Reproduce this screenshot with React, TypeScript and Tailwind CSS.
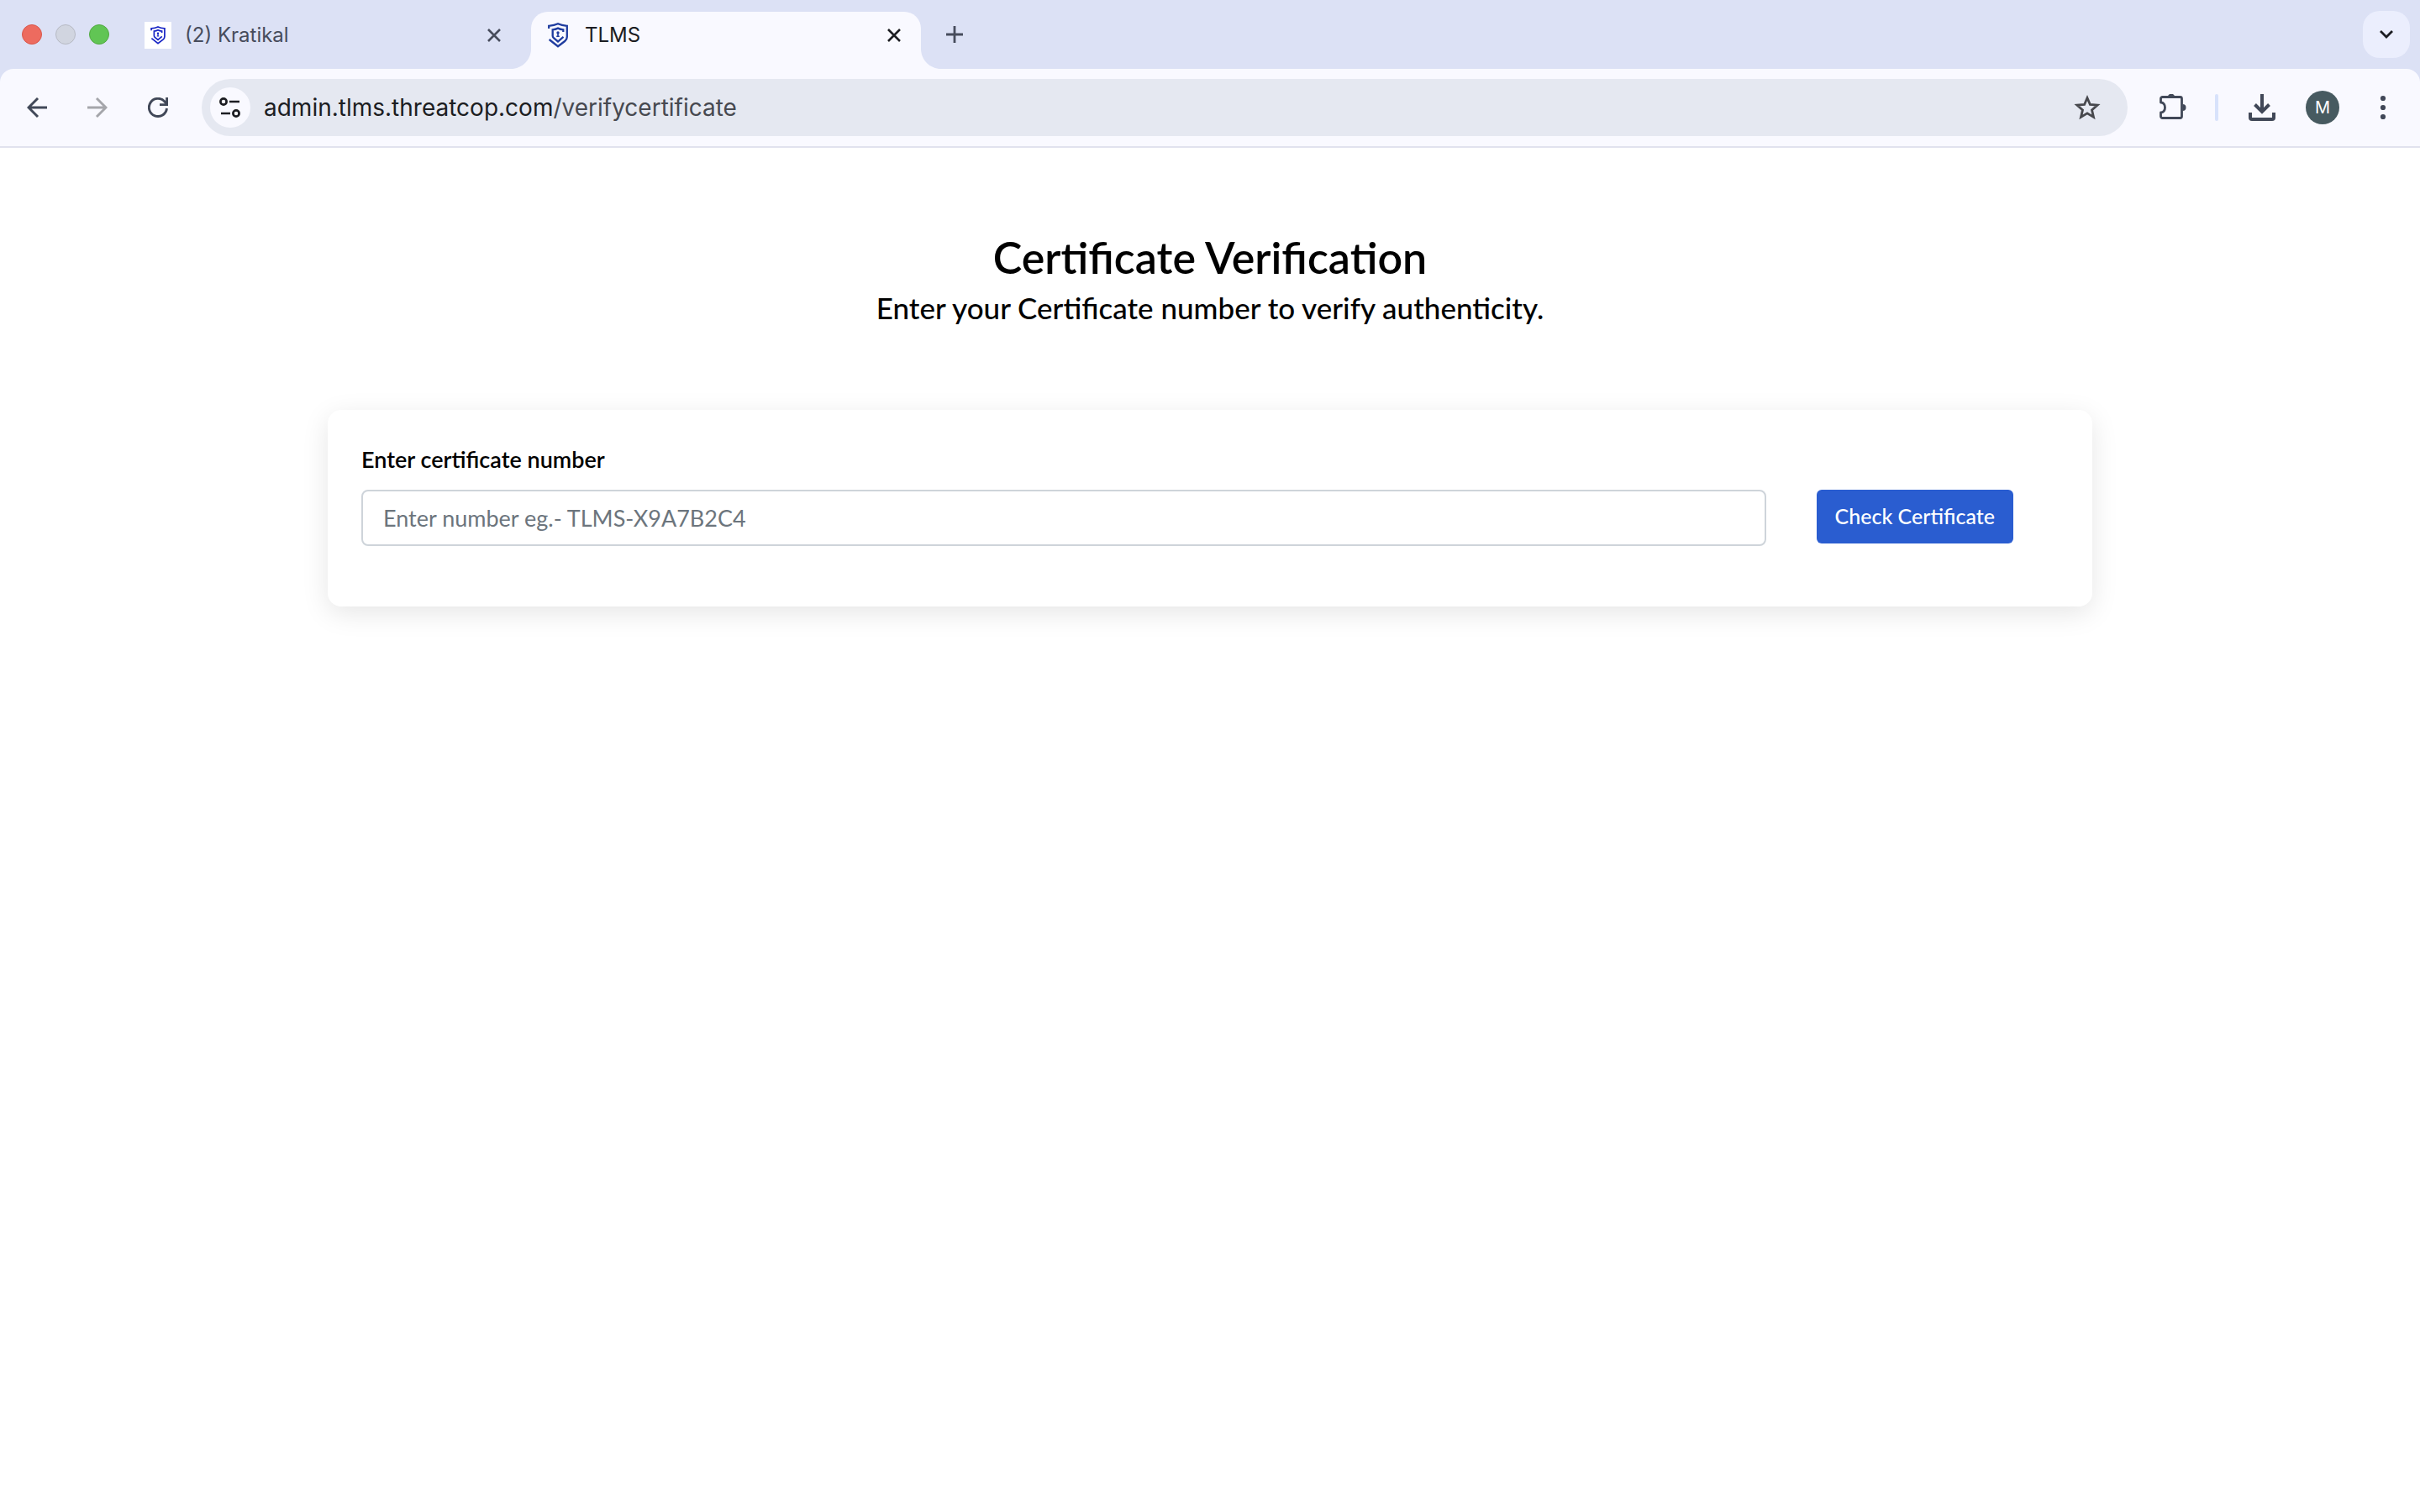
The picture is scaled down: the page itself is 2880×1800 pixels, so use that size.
import type { ReactNode } from "react";

function ShieldLogo({ className }: { className: string }) {
  return (
    <svg viewBox="0 0 24 30" className={className} fill="none" stroke="currentColor" strokeWidth="2.3" aria-hidden="true">
      <path d="M1.200 7V3.800C5 3.600 9 2.800 12 1.300c3 1.500 7 2.300 10.800 2.500V17c0 2.200-.8 3.600-2.600 5L12 28.200 1.600 20" />
      <path d="M18.300 11V8.300c-2.300-.2-4.500-.8-6.300-1.700-1.800.9-4 1.500-6.300 1.700v7.500c0 1 .4 1.700 1.200 2.400L12 22.500l6.500-5.700" />
      <circle cx="12" cy="12" r="1.700" fill="currentColor" stroke="none" />
      <path d="M12 12.500v3.800" strokeWidth="1.600" />
      <path d="M10.200 16.300h3.600" strokeWidth="1.500" />
    </svg>
  );
}

function CloseIcon() {
  return (
    <svg viewBox="0 0 16 16" className="size-4" fill="none" stroke="currentColor" strokeWidth="2.6" aria-hidden="true">
      <path d="M1 1l14 14M15 1L1 15" />
    </svg>
  );
}

function IconButton({ label, className = "", children }: { label: string; className?: string; children: ReactNode }) {
  return (
    <button type="button" aria-label={label} className={`flex shrink-0 items-center justify-center ${className}`}>
      {children}
    </button>
  );
}

function TabStrip() {
  return (
    <div className="flex h-[82px] items-center bg-[#dce1f5] pr-3 pl-[26px] text-[24px] text-[#474c5c]">
      <div className="flex w-[146px] shrink-0 gap-4">
        <button type="button" aria-label="Close window" className="size-6 rounded-full border border-[#d9574b] bg-[#ed6b5f]" />
        <button type="button" aria-label="Minimize window" className="size-6 rounded-full border border-[#b7bac4] bg-[#d1d5e0]" />
        <button type="button" aria-label="Zoom window" className="size-6 rounded-full border border-[#52a941] bg-[#61c554]" />
      </div>
      <div className="flex w-[460px] shrink-0 items-center pt-px pr-9">
        <span className="flex size-8 items-center justify-center bg-white text-[#1522c4]">
          <ShieldLogo className="h-[22px] w-[18px]" />
        </span>
        <span className="ml-4 flex-1">(2) Kratikal</span>
        <IconButton label="Close tab" className="size-4">
          <CloseIcon />
        </IconButton>
      </div>
      <div className="relative flex h-[68px] w-[464px] shrink-0 items-center self-end rounded-t-[20px] bg-[#f9f9ff] pr-6 pb-3 pl-5 text-[#1c1d22]">
        <svg viewBox="0 0 24 24" className="absolute bottom-0 -left-6 size-6" fill="#f9f9ff" aria-hidden="true">
          <path d="M24 0v24H0C13.300 24 24 13.300 24 0z" />
        </svg>
        <svg viewBox="0 0 24 24" className="absolute -right-6 bottom-0 size-6" fill="#f9f9ff" aria-hidden="true">
          <path d="M0 0v24h24C10.700 24 0 13.300 0 0z" />
        </svg>
        <ShieldLogo className="h-[30px] w-6 text-[#1f3c9f]" />
        <span className="ml-5 flex-1">TLMS</span>
        <IconButton label="Close tab" className="size-4">
          <CloseIcon />
        </IconButton>
      </div>
      <IconButton label="New tab" className="ml-[30px] size-5">
        <svg viewBox="0 0 20 20" className="size-5" stroke="currentColor" strokeWidth="2.8" aria-hidden="true">
          <path d="M10 0v20M0 10h20" />
        </svg>
      </IconButton>
      <IconButton label="Search tabs" className="ml-auto size-14 rounded-[20px] bg-[#ebeefd] text-[#1c1d22]">
        <svg viewBox="0 0 16 10" className="h-[10px] w-4" fill="none" stroke="currentColor" strokeWidth="2.800" aria-hidden="true">
          <path d="M1 1l7 7 7-7" />
        </svg>
      </IconButton>
    </div>
  );
}

function Toolbar() {
  return (
    <div className="bg-[#dce1f5]">
      <div className="flex h-[94px] items-center rounded-t-[16px] border-b-2 border-[#e1e2ee] bg-[#f9f9ff] pr-8 pl-8 text-[#414858]">
        <IconButton label="Back" className="size-6">
          <svg viewBox="0 0 24 24" className="size-6" fill="none" stroke="currentColor" strokeWidth="2.900" aria-hidden="true">
            <path d="M24 12H2M13 1L2 12l11 11" />
          </svg>
        </IconButton>
        <IconButton label="Forward" className="ml-12 size-6 text-[#a5a6ab]">
          <svg viewBox="0 0 24 24" className="size-6" fill="none" stroke="currentColor" strokeWidth="2.900" aria-hidden="true">
            <path d="M0 12h22M11 1l11 11-11 11" />
          </svg>
        </IconButton>
        <IconButton label="Reload" className="ml-12 size-6">
          <svg viewBox="0 0 24 24" className="size-6" fill="none" stroke="currentColor" strokeWidth="2.900" aria-hidden="true">
            <path d="M22.500 13A10.600 10.600 0 1 1 20 5l2.500 2.800" />
            <path d="M22.600 0v8.600H14" />
          </svg>
        </IconButton>
        <div className="ml-10 flex h-[68px] flex-1 items-center rounded-full bg-[#e5e8f1] pr-8 pl-[10px]">
          <IconButton label="Site information" className="size-12 rounded-full bg-[#f9f9ff] text-[#1c1d22]">
            <svg viewBox="0 0 26 24" className="h-6 w-[26px]" fill="none" stroke="currentColor" strokeWidth="2.700" aria-hidden="true">
              <circle cx="5" cy="5" r="3.600" />
              <path d="M12 5h12M2 19h11" />
              <circle cx="20" cy="19" r="3.600" />
            </svg>
          </IconButton>
          <div role="textbox" aria-label="Address" tabIndex={0} className="ml-4 flex-1 text-[28px] leading-9 text-[#1c1d22]">
            admin.tlms.threatcop.com<span className="text-[#474950]">/verifycertificate</span>
          </div>
          <IconButton label="Bookmark this page" className="size-8 text-[#47484d]">
            <svg viewBox="0 0 32 32" className="size-8" fill="none" stroke="currentColor" strokeWidth="2.800" aria-hidden="true">
              <path d="M16 4.500l3.400 8 8.700.7-6.600 5.700 2 8.500L16 22.900l-7.500 4.500 2-8.500-6.600-5.700 8.700-.7z" />
            </svg>
          </IconButton>
        </div>
        <IconButton label="Extensions" className="ml-[38px] h-8 w-8">
          <svg viewBox="0 0 32 32" className="size-8" fill="none" stroke="currentColor" strokeWidth="2.800" strokeLinejoin="round" aria-hidden="true">
            <path d="M1.500 10V5.500a2 2 0 0 1 2-2h21a2 2 0 0 1 2 2v21a2 2 0 0 1-2 2h-21a2 2 0 0 1-2-2V22c3.500 0 5-3 5-6s-1.500-6-5-6z" />
            <path d="M10 3.500a4 3.800 0 0 1 8 0zM27.500 12a4 4 0 0 1 0 8z" fill="currentColor" stroke="none" />
          </svg>
        </IconButton>
        <div className="ml-[34px] h-8 w-1 rounded-full bg-[#d8e2fb]" />
        <IconButton label="Downloads" className="ml-9 size-8">
          <svg viewBox="0 0 32 32" className="size-8" fill="none" stroke="currentColor" strokeWidth="4" aria-hidden="true">
            <path d="M16 0v20M7.500 12.500L16 21l8.500-8.500" />
            <path d="M2 22v6a2 2 0 0 0 2 2h24a2 2 0 0 0 2-2v-6" />
          </svg>
        </IconButton>
        <button type="button" aria-label="Profile" className="ml-9 size-10 rounded-full bg-[#475a60] text-[20px] text-white">
          M
        </button>
        <IconButton label="Menu" className="ml-10 h-8 w-6">
          <svg viewBox="0 0 24 32" className="h-8 w-6" fill="currentColor" aria-hidden="true">
            <circle cx="12" cy="5" r="3.100" />
            <circle cx="12" cy="16" r="3.100" />
            <circle cx="12" cy="27" r="3.100" />
          </svg>
        </IconButton>
      </div>
    </div>
  );
}

export default function App() {
  return (
    <div className="min-h-screen bg-white font-['Inter',sans-serif]">
      <header>
        <TabStrip />
        <Toolbar />
      </header>
      <main className="px-6 pt-[98px] font-['Lato',sans-serif] text-black">
        <h1 className="text-center text-[52px] leading-[64px] font-semibold">Certificate Verification</h1>
        <p className="text-center text-[35px] leading-[56px] font-medium">Enter your Certificate number to verify authenticity.</p>
        <form className="mx-auto mt-[94px] flex max-w-[2100px] items-start gap-[60px] rounded-[16px] bg-white pt-10 pr-[94px] pb-[72px] pl-10 shadow-[0_8px_32px_rgba(0,0,0,0.1)]">
          <div className="flex-1">
            <label htmlFor="certificate" className="block text-[27px] leading-[38px] font-semibold">
              Enter certificate number
            </label>
            <input
              id="certificate"
              type="text"
              placeholder="Enter number eg.- TLMS-X9A7B2C4"
              className="mt-[17px] block h-[67px] w-full rounded-[8px] border-2 border-[#ced4da] px-6 text-[27px] placeholder:text-[#6c757d]"
            />
          </div>
          <button type="button" className="mt-[55px] h-16 rounded-[6px] bg-[#2a5dd0] px-[22px] text-[25px] font-medium whitespace-nowrap text-white">
            Check Certificate
          </button>
        </form>
      </main>
    </div>
  );
}
